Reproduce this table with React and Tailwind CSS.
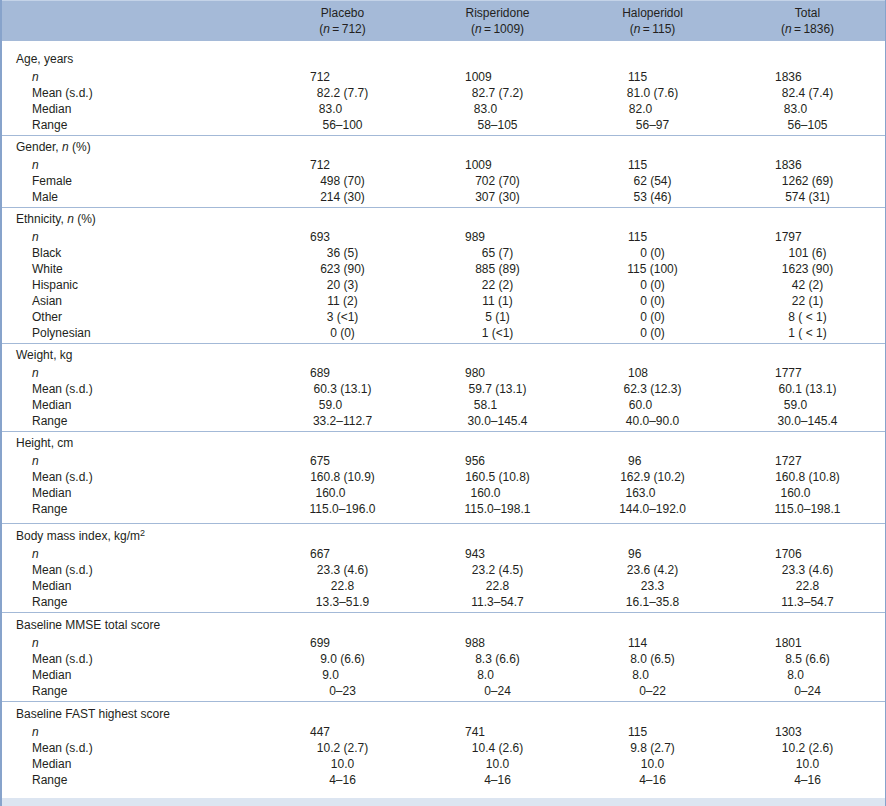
import React from 'react';

const columns = [
  { name: 'Placebo', total: '712', nPad: 'pl-[45px]' },
  { name: 'Risperidone', total: '1009', nPad: 'pl-[45px]' },
  { name: 'Haloperidol', total: '115', nPad: 'pl-[53px]' },
  { name: 'Total', total: '1836', nPad: 'pl-[45px]' },
];

const N = <i>n</i>;

// shift: 'left' nudges centred values leftwards (how the source set some medians)
const groups = [
  {
    label: 'Age, years',
    pad: 'pt-[10px] pb-[2px]',
    rows: [
      ['n', ['712', '1009', '115', '1836']],
      ['Mean (s.d.)', ['82.2 (7.7)', '82.7 (7.2)', '81.0 (7.6)', '82.4 (7.4)']],
      ['Median', ['83.0', '83.0', '82.0', '83.0'], 'left'],
      ['Range', ['56–100', '58–105', '56–97', '56–105']],
    ],
  },
  {
    label: <>Gender, {N} (%)</>,
    rows: [
      ['n', ['712', '1009', '115', '1836']],
      ['Female', ['498 (70)', '702 (70)', '62 (54)', '1262 (69)']],
      ['Male', ['214 (30)', '307 (30)', '53 (46)', '574 (31)']],
    ],
  },
  {
    label: <>Ethnicity, {N} (%)</>,
    rows: [
      ['n', ['693', '989', '115', '1797']],
      ['Black', ['36 (5)', '65 (7)', '0 (0)', '101 (6)']],
      ['White', ['623 (90)', '885 (89)', '115 (100)', '1623 (90)']],
      ['Hispanic', ['20 (3)', '22 (2)', '0 (0)', '42 (2)']],
      ['Asian', ['11 (2)', '11 (1)', '0 (0)', '22 (1)']],
      ['Other', ['3 (<1)', '5 (1)', '0 (0)', '8 ( < 1)']],
      ['Polynesian', ['0 (0)', '1 (<1)', '0 (0)', '1 ( < 1)']],
    ],
  },
  {
    label: 'Weight, kg',
    rows: [
      ['n', ['689', '980', '108', '1777']],
      ['Mean (s.d.)', ['60.3 (13.1)', '59.7 (13.1)', '62.3 (12.3)', '60.1 (13.1)']],
      ['Median', ['59.0', '58.1', '60.0', '59.0'], 'left'],
      ['Range', ['33.2–112.7', '30.0–145.4', '40.0–90.0', '30.0–145.4']],
    ],
  },
  {
    label: 'Height, cm',
    pad: 'border-t border-[#a3b9d7] pt-[3px] pb-[6px]',
    rows: [
      ['n', ['675', '956', '96', '1727']],
      ['Mean (s.d.)', ['160.8 (10.9)', '160.5 (10.8)', '162.9 (10.2)', '160.8 (10.8)']],
      ['Median', ['160.0', '160.0', '163.0', '160.0'], 'left'],
      ['Range', ['115.0–196.0', '115.0–198.1', '144.0–192.0', '115.0–198.1']],
    ],
  },
  {
    label: <>Body mass index, kg/m<sup className="text-[9px] leading-none">2</sup></>,
    pad: 'border-t border-[#a3b9d7] pt-[4px] pb-[2px]',
    rows: [
      ['n', ['667', '943', '96', '1706']],
      ['Mean (s.d.)', ['23.3 (4.6)', '23.2 (4.5)', '23.6 (4.2)', '23.3 (4.6)']],
      ['Median', ['22.8', '22.8', '23.3', '22.8']],
      ['Range', ['13.3–51.9', '11.3–54.7', '16.1–35.8', '11.3–54.7']],
    ],
  },
  {
    label: 'Baseline MMSE total score',
    pad: 'border-t border-[#a3b9d7] pt-[4px] pb-[2px]',
    rows: [
      ['n', ['699', '988', '114', '1801']],
      ['Mean (s.d.)', ['9.0 (6.6)', '8.3 (6.6)', '8.0 (6.5)', '8.5 (6.6)']],
      ['Median', ['9.0', '8.0', '8.0', '8.0'], 'left'],
      ['Range', ['0–23', '0–24', '0–22', '0–24']],
    ],
  },
  {
    label: 'Baseline FAST highest score',
    pad: 'border-t border-[#a3b9d7] pt-[4px] pb-[10px]',
    rows: [
      ['n', ['447', '741', '115', '1303']],
      ['Mean (s.d.)', ['10.2 (2.7)', '10.4 (2.6)', '9.8 (2.7)', '10.2 (2.6)']],
      ['Median', ['10.0', '10.0', '10.0', '10.0']],
      ['Range', ['4–16', '4–16', '4–16', '4–16']],
    ],
  },
];

const gridCols = 'grid grid-cols-[263px_repeat(4,155px)]';

const Group = ({ group }) => {
  const pad = group.pad || 'border-t border-[#a3b9d7] pt-[3px] pb-[2px]';
  return (
    <div className={pad}>
      <div className={`${gridCols} h-4 mb-[2px]`}>
        <div className="pl-[14px] whitespace-nowrap">{group.label}</div>
      </div>
      {group.rows.map(([label, values, shift]) => {
        const isN = label === 'n';
        return (
          <div key={label} className={`${gridCols} h-4`}>
            <div className="pl-[30px]">{isN ? N : label}</div>
            {values.map((v, i) => (
              <div
                key={i}
                className={
                  isN
                    ? columns[i].nPad
                    : `text-center whitespace-pre ${shift === 'left' ? 'pr-[24px]' : ''}`
                }
              >
                {v}
              </div>
            ))}
          </div>
        );
      })}
    </div>
  );
};

export default function App() {
  return (
    <div
      className="w-[886px] bg-white text-[12px] leading-4 text-[#231f20]"
      style={{ fontFamily: '"Liberation Sans", Arial, sans-serif' }}
    >
      <div className="border-l-2 border-r border-[#87a3cb]">
        <div className={`${gridCols} h-[41px] bg-[#a5bad8] border-t border-[#c4d3e8] pt-[4px]`}>
          <div />
          {columns.map((c) => (
            <div key={c.name} className="flex flex-col items-center">
              <span>{c.name}</span>
              <span>
                (<i>n</i>{'\u2009=\u2009'}{c.total})
              </span>
            </div>
          ))}
        </div>
        {groups.map((g, i) => (
          <Group key={i} group={g} />
        ))}
        <div className="h-[8px] bg-[#dce5f1]" />
      </div>
    </div>
  );
}
